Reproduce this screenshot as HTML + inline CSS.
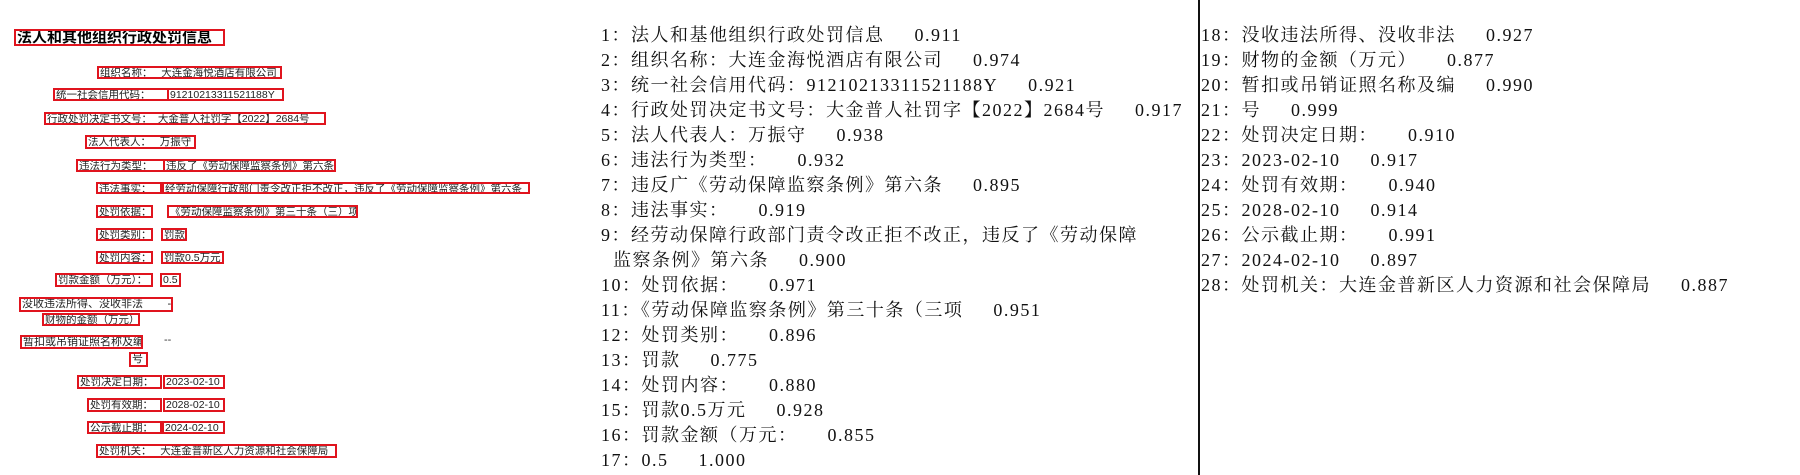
<!DOCTYPE html>
<html><head><meta charset="utf-8">
<style>
html,body{margin:0;padding:0;background:#fff;}
body{width:1800px;height:475px;position:relative;overflow:hidden;}
.b{position:absolute;border:2px solid #e0141e;box-sizing:border-box;font-family:"Liberation Sans","Noto Sans CJK SC",sans-serif;font-size:10.5px;line-height:10px;color:#222;white-space:nowrap;overflow:hidden;padding-left:1px;}
.t{position:absolute;font-family:"Liberation Sans","Noto Sans CJK SC",sans-serif;font-size:11px;color:#333;white-space:nowrap;}
.col{position:absolute;top:23px;font-family:"Liberation Serif","Noto Serif CJK SC",serif;font-size:18px;line-height:25px;color:#111;white-space:pre;letter-spacing:1.5px;}
.col span{margin-left:30px;}
.div{position:absolute;left:1198px;top:0;width:2px;height:475px;background:#111;}
</style></head><body>
<div class="b" style="left:14px;top:29px;width:211px;height:17px;font-size:15px;line-height:13px;font-weight:bold;color:#000;">法人和其他组织行政处罚信息</div>

<div class="b" style="left:97px;top:66px;width:185px;height:13px;">组织名称：&nbsp;&nbsp;&nbsp;大连金海悦酒店有限公司</div>
<div class="b" style="left:53px;top:88px;width:116px;height:13px;">统一社会信用代码：</div>
<div class="b" style="left:167px;top:88px;width:117px;height:13px;">91210213311521188Y</div>
<div class="b" style="left:44px;top:112px;width:282px;height:13px;">行政处罚决定书文号：&nbsp;&nbsp;大金普人社罚字【2022】2684号</div>
<div class="b" style="left:85px;top:135px;width:111px;height:14px;">法人代表人：&nbsp;&nbsp;&nbsp;万振守</div>
<div class="b" style="left:76px;top:159px;width:89px;height:13px;">违法行为类型：</div>
<div class="b" style="left:163px;top:159px;width:173px;height:13px;">违反了《劳动保障监察条例》第六条</div>
<div class="b" style="left:96px;top:182px;width:66px;height:12px;">违法事实：</div>
<div class="b" style="left:162px;top:182px;width:368px;height:12px;">经劳动保障行政部门责令改正拒不改正，违反了《劳动保障监察条例》第六条</div>
<div class="b" style="left:96px;top:205px;width:57px;height:13px;">处罚依据：</div>
<div class="b" style="left:167px;top:205px;width:191px;height:13px;">《劳动保障监察条例》第三十条（三）项</div>
<div class="b" style="left:96px;top:228px;width:57px;height:13px;">处罚类别：</div>
<div class="b" style="left:161px;top:228px;width:26px;height:13px;">罚款</div>
<div class="b" style="left:96px;top:251px;width:57px;height:13px;">处罚内容：</div>
<div class="b" style="left:161px;top:251px;width:63px;height:13px;">罚款0.5万元</div>
<div class="b" style="left:55px;top:273px;width:98px;height:14px;">罚款金额（万元）：</div>
<div class="b" style="left:160px;top:273px;width:21px;height:14px;">0.5</div>
<div class="b" style="left:19px;top:297px;width:154px;height:15px;font-size:11px;">没收违法所得、没收非法&nbsp;&nbsp;&nbsp;&nbsp;&nbsp;&nbsp;&nbsp;&nbsp;--</div>
<div class="b" style="left:42px;top:313px;width:98px;height:13px;">财物的金额（万元）</div>
<div class="b" style="left:20px;top:335px;width:123px;height:14px;font-size:11px;">暂扣或吊销证照名称及编</div>
<div class="t" style="left:164px;top:334px;">--</div>
<div class="b" style="left:129px;top:352px;width:19px;height:15px;font-size:11px;">号</div>
<div class="b" style="left:77px;top:375px;width:85px;height:14px;">处罚决定日期：</div>
<div class="b" style="left:163px;top:375px;width:62px;height:14px;">2023-02-10</div>
<div class="b" style="left:87px;top:398px;width:75px;height:14px;">处罚有效期：</div>
<div class="b" style="left:163px;top:398px;width:62px;height:14px;">2028-02-10</div>
<div class="b" style="left:87px;top:421px;width:75px;height:13px;">公示截止期：</div>
<div class="b" style="left:162px;top:421px;width:63px;height:13px;">2024-02-10</div>
<div class="b" style="left:96px;top:444px;width:241px;height:14px;">处罚机关：&nbsp;&nbsp;&nbsp;大连金普新区人力资源和社会保障局</div>

<div class="col" style="left:601px;">1：法人和基他组织行政处罚信息<span>0.911</span>
2：组织名称：大连金海悦酒店有限公司<span>0.974</span>
3：统一社会信用代码：91210213311521188Y<span>0.921</span>
4：行政处罚决定书文号：大金普人社罚字【2022】2684号<span>0.917</span>
5：法人代表人：万振守<span>0.938</span>
6：违法行为类型：<span>0.932</span>
7：违反广《劳动保障监察条例》第六条<span>0.895</span>
8：违法事实：<span>0.919</span>
9：经劳动保障行政部门责令改正拒不改正，违反了《劳动保障
  监察条例》第六条<span>0.900</span>
10：处罚依据：<span>0.971</span>
11：《劳动保障监察条例》第三十条（三项<span>0.951</span>
12：处罚类别：<span>0.896</span>
13：罚款<span>0.775</span>
14：处罚内容：<span>0.880</span>
15：罚款0.5万元<span>0.928</span>
16：罚款金额（万元：<span>0.855</span>
17：0.5<span>1.000</span></div>
<div class="div"></div>
<div class="col" style="left:1201px;">18：没收违法所得、没收非法<span>0.927</span>
19：财物的金额（万元）<span>0.877</span>
20：暂扣或吊销证照名称及编<span>0.990</span>
21：号<span>0.999</span>
22：处罚决定日期：<span>0.910</span>
23：2023-02-10<span>0.917</span>
24：处罚有效期：<span>0.940</span>
25：2028-02-10<span>0.914</span>
26：公示截止期：<span>0.991</span>
27：2024-02-10<span>0.897</span>
28：处罚机关：大连金普新区人力资源和社会保障局<span>0.887</span></div>
</body></html>
